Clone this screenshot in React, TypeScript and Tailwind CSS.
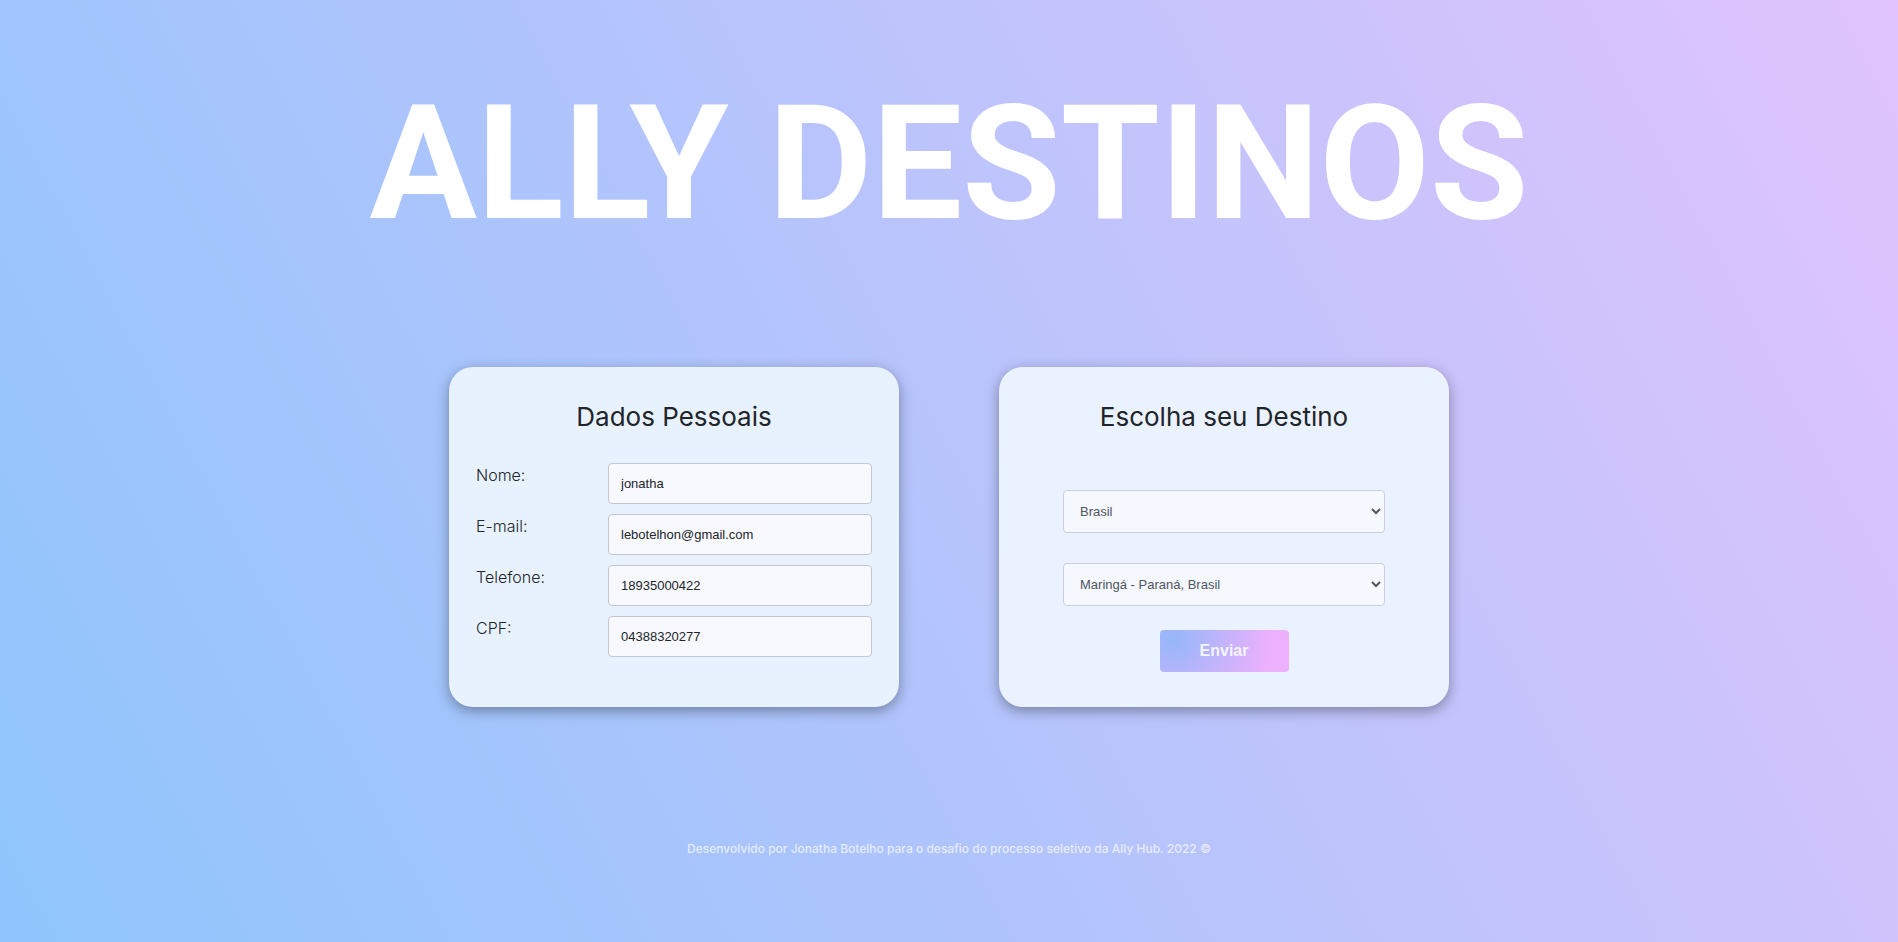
import type { ReactNode } from "react";

const fields = [
  { id: "nome", label: "Nome:", type: "text", value: "jonatha" },
  { id: "email", label: "E-mail:", type: "email", value: "lebotelhon@gmail.com" },
  { id: "telefone", label: "Telefone:", type: "tel", value: "18935000422" },
  { id: "cpf", label: "CPF:", type: "text", value: "04388320277" },
];

const destinations = [
  { id: "pais", label: "País", options: ["Brasil"] },
  { id: "cidade", label: "Cidade", options: ["Maringá - Paraná, Brasil"] },
];

function Card({ title, tone, children }: { title: string; tone: string; children: ReactNode }) {
  return (
    <section
      className={`flex min-h-[340px] w-full max-w-[450px] flex-col rounded-3xl px-[27px] pt-[34px] pb-8 shadow-[0_4px_14px_rgba(0,0,0,0.35)] ${tone}`}
    >
      <h2 className="text-center text-[26px] leading-8 text-[#212529]">{title}</h2>
      {children}
    </section>
  );
}

export default function App() {
  return (
    <div className="flex min-h-screen flex-col items-center bg-[linear-gradient(62deg,#8EC5FC_0%,#E0C3FC_100%)] px-6 font-['Inter',sans-serif]">
      <h1 className="pt-16 text-center font-['Roboto',sans-serif] text-[160px] leading-[200px] font-bold text-white">
        ALLY DESTINOS
      </h1>

      <form
        className="mt-[103px] flex w-full flex-wrap justify-center gap-[100px]"
        onSubmit={(event) => event.preventDefault()}
      >
        <Card title="Dados Pessoais" tone="bg-[#e8f2ff]">
          <div className="mt-[30px] flex flex-col gap-[10px]">
            {fields.map((field) => (
              <div key={field.id} className="flex justify-between">
                <label htmlFor={field.id} className="text-base font-light text-[#212529]">
                  {field.label}
                </label>
                <input
                  id={field.id}
                  type={field.type}
                  defaultValue={field.value}
                  className="h-[41px] w-[264px] rounded border border-[#c5c7d0] bg-[#f8f9ff] px-3 font-['Liberation_Sans',sans-serif] text-[13px] text-[#212529]"
                />
              </div>
            ))}
          </div>
        </Card>

        <Card title="Escolha seu Destino" tone="bg-[#ebf2ff]">
          <div className="mt-[57px] flex flex-col items-center gap-[30px]">
            {destinations.map((item) => (
              <select
                key={item.id}
                id={item.id}
                aria-label={item.label}
                className="h-[43px] w-[322px] rounded border border-[#cdd0da] bg-[#f5f8ff] px-3 font-['Liberation_Sans',sans-serif] text-[13px] text-[#50555d]"
              >
                {item.options.map((option) => (
                  <option key={option}>{option}</option>
                ))}
              </select>
            ))}
          </div>
          <button
            type="submit"
            className="mt-6 h-[42px] w-[129px] self-center rounded bg-[radial-gradient(circle_at_10%_20%,#95b7f9_0%,#ecb0fd_80%)] font-['Liberation_Sans',sans-serif] text-base font-bold text-[#f5f5ff]"
          >
            Enviar
          </button>
        </Card>
      </form>

      <footer className="mt-[132px] pb-8 text-center text-xs leading-5 font-medium text-white/70">
        Desenvolvido por Jonatha Botelho para o desafio do processo seletivo da Ally Hub. 2022 ©
      </footer>
    </div>
  );
}
